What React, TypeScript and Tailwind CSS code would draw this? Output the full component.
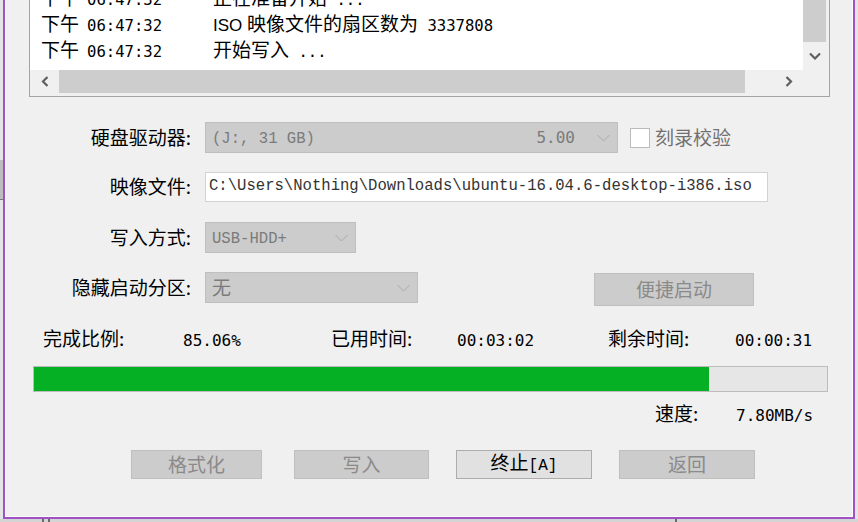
import React from 'react';

type Seg = { t: string; k: 'cjk' | 'mono' | 'sans' };

const logRows: { day: string; time: string; msg: Seg[] }[] = [
  { day: '下午', time: '06:47:32', msg: [{ t: '正在准备开始', k: 'cjk' }, { t: ' ...', k: 'mono' }] },
  {
    day: '下午',
    time: '06:47:32',
    msg: [
      { t: 'ISO ', k: 'sans' },
      { t: '映像文件的扇区数为', k: 'cjk' },
      { t: ' 3337808', k: 'mono' },
    ],
  },
  { day: '下午', time: '06:47:32', msg: [{ t: '开始写入', k: 'cjk' }, { t: ' ...', k: 'mono' }] },
];

const segClass: Record<Seg['k'], string> = {
  cjk: "text-[19px] font-['Noto_Sans_CJK_SC',sans-serif]",
  mono: "text-[15.6px] font-['DejaVu_Sans_Mono',monospace] whitespace-pre",
  sans: "text-[17px] font-['Liberation_Sans',sans-serif] whitespace-pre",
};

const progress = 85.06;

const ComboArrow = () => (
  <svg width="13" height="8" viewBox="0 0 13 8">
    <path d="M0.5 1 L6.5 7 L12.5 1" fill="none" stroke="#a9a9a9" strokeWidth="1" />
  </svg>
);

const ScrollArrow = ({ dir }: { dir: 'down' | 'left' | 'right' }) => {
  if (dir === 'down') {
    return (
      <svg width="12" height="8" viewBox="0 0 12 8">
        <path d="M1 1.5 L6 6.5 L11 1.5" fill="none" stroke="#5f5f5f" strokeWidth="2.2" />
      </svg>
    );
  }
  return (
    <svg width="8" height="11" viewBox="0 0 8 11">
      <path
        d={dir === 'left' ? 'M6.5 1 L2 5.5 L6.5 10' : 'M1.5 1 L6 5.5 L1.5 10'}
        fill="none"
        stroke="#5f5f5f"
        strokeWidth="2.2"
      />
    </svg>
  );
};

const Label: React.FC<{ children: React.ReactNode }> = ({ children }) => (
  <div className="w-[185px] pb-[3px] text-right text-[19px] leading-none text-black">{children}</div>
);

const Combo: React.FC<{ width: string; children: React.ReactNode; right?: string }> = ({ width, children, right }) => (
  <div className={`${width} h-[31px] ml-[14px] flex items-center bg-[#cccccc] border border-[#bfbfbf]`}>
    <div className="flex-1 pl-[6px] text-[#7b7b7b] leading-none">{children}</div>
    {right && (
      <span className="mr-[14px] text-[16px] leading-none text-[#7b7b7b] font-['DejaVu_Sans_Mono',monospace]">{right}</span>
    )}
    <div className="w-[28px] flex justify-center">
      <ComboArrow />
    </div>
  </div>
);

const Btn: React.FC<{ width: string; enabled?: boolean; children: React.ReactNode }> = ({ width, enabled, children }) => (
  <div
    className={`${width} h-[29px] pb-[3px] flex items-center justify-center text-[19px] leading-none border ${
      enabled ? 'bg-[#e1e1e1] border-[#adadad] text-black' : 'bg-[#cccccc] border-[#bfbfbf] text-[#8a8a8a]'
    }`}
  >
    <div className="flex items-baseline">{children}</div>
  </div>
);

export default function App() {
  return (
    <div className="w-[858px] h-[522px] overflow-hidden bg-[#dcdcdc] flex flex-col font-['Noto_Sans_CJK_SC',sans-serif]">
      <div className="flex h-[519px]">
        {/* backdrop left of the window */}
        <div className="w-[3px] flex flex-col">
          <div className="h-[160px] bg-[#e4e4e4]" />
          <div className="h-[40px] bg-[#bdbdbd] border-b border-[#7a7a7a]" />
          <div className="flex-1 bg-[#e4e4e4]" />
        </div>

        <div className="w-[852px] h-[519px] border-x-2 border-b-2 border-[#9f52c6]">
          <div className="h-full border-x border-b border-[#fbfbfb] bg-[#f0f0f0] flex flex-col">
            {/* log list */}
            <div className="ml-[23px] w-[801px] h-[117px] -mt-[20px] border border-[#a3a3a3] bg-[#f0f0f0] pr-[3px] pb-[3px]">
              <div className="h-full grid grid-cols-[1fr_23px] grid-rows-[1fr_23px]">
                <div className="bg-white pt-[5px] pl-[11px] overflow-hidden">
                  {logRows.map((r, i) => (
                    <div key={i} className="h-[26px] pb-[2px] flex items-center leading-none text-black">
                      <div className="flex items-baseline">
                        <div className="w-[172px] flex items-baseline">
                          <span className="text-[19px]">{r.day}</span>
                          <span className="ml-[8px] text-[15.6px] font-['DejaVu_Sans_Mono',monospace]">{r.time}</span>
                        </div>
                        {r.msg.map((s, j) => (
                          <span key={j} className={segClass[s.k]}>
                            {s.t}
                          </span>
                        ))}
                      </div>
                    </div>
                  ))}
                </div>
                <div className="flex flex-col bg-[#f0f0f0]">
                  <div className="h-[61px] bg-[#cdcdcd]" />
                  <div className="flex-1 flex items-center justify-center">
                    <ScrollArrow dir="down" />
                  </div>
                </div>
                <div className="flex bg-[#f0f0f0]">
                  <div className="w-[29px] flex items-center justify-center">
                    <ScrollArrow dir="left" />
                  </div>
                  <div className="w-[686px] bg-[#cdcdcd]" />
                  <div className="flex-1" />
                  <div className="w-[28px] flex items-center justify-center">
                    <ScrollArrow dir="right" />
                  </div>
                </div>
                <div className="bg-[#f0f0f0]" />
              </div>
            </div>

            {/* drive */}
            <div className="mt-[25px] h-[31px] flex items-center">
              <Label>硬盘驱动器:</Label>
              <Combo width="w-[413px]" right="5.00">
                <span className="text-[15.6px] font-['Liberation_Mono',monospace] whitespace-pre">(J:, 31 GB)</span>
              </Combo>
              <div className="ml-[12px] w-[20px] h-[20px] bg-white border border-[#bcbcbc]" />
              <span className="ml-[5px] pb-[3px] text-[19px] leading-none text-[#707070]">刻录校验</span>
            </div>

            {/* image file */}
            <div className="mt-[19px] h-[30px] flex items-center">
              <Label>映像文件:</Label>
              <div className="ml-[14px] w-[563px] h-[30px] flex items-center bg-white border border-[#d2d2d2] pl-[3px]">
                <span className="text-[15.6px] leading-none text-[#333333] font-['Liberation_Mono',monospace] whitespace-pre">
                  C:\Users\Nothing\Downloads\ubuntu-16.04.6-desktop-i386.iso
                </span>
              </div>
            </div>

            {/* write mode */}
            <div className="mt-[20px] h-[31px] flex items-center">
              <Label>写入方式:</Label>
              <Combo width="w-[151px]">
                <span className="text-[15.6px] font-['Liberation_Mono',monospace]">USB-HDD+</span>
              </Combo>
            </div>

            {/* hidden partition */}
            <div className="mt-[19px] h-[34px] flex items-start">
              <div className="h-[31px] flex items-center">
                <Label>隐藏启动分区:</Label>
                <Combo width="w-[213px]">
                  <span className="block pb-[3px] text-[19px]">无</span>
                </Combo>
              </div>
              <div className="ml-[176px] mt-[1px] w-[160px] h-[33px] pb-[3px] flex items-center justify-center bg-[#cccccc] border border-[#bfbfbf] text-[19px] leading-none text-[#8a8a8a]">
                便捷启动
              </div>
            </div>

            {/* stats */}
            <div className="mt-[22px] h-[24px] pb-[3px] pl-[37px] flex items-center leading-none text-black">
              <div className="flex items-baseline">
                <span className="w-[140px] text-[19px]">完成比例:</span>
                <span className="w-[148px] text-[16px] font-['DejaVu_Sans_Mono',monospace]">{progress.toFixed(2)}%</span>
                <span className="w-[126px] text-[19px]">已用时间:</span>
                <span className="w-[151px] text-[16px] font-['DejaVu_Sans_Mono',monospace]">00:03:02</span>
                <span className="w-[127px] text-[19px]">剩余时间:</span>
                <span className="text-[16px] font-['DejaVu_Sans_Mono',monospace]">00:00:31</span>
              </div>
            </div>

            {/* progress bar */}
            <div className="mt-[14px] ml-[27px] w-[795px] h-[26px] border border-[#bcbcbc] bg-[#e6e6e6]">
              <div className="h-full bg-[#06b025]" style={{ width: `${progress}%` }} />
            </div>

            {/* speed */}
            <div className="mt-[10px] h-[24px] pb-[2px] pl-[649px] flex items-center leading-none text-black">
              <div className="flex items-baseline">
                <span className="w-[81px] text-[19px]">速度:</span>
                <span className="text-[16px] font-['DejaVu_Sans_Mono',monospace]">7.80MB/s</span>
              </div>
            </div>

            {/* buttons */}
            <div className="mt-[24px] pl-[125px] flex">
              <Btn width="w-[131px]">格式化</Btn>
              <div className="w-[32px]" />
              <Btn width="w-[135px]">写入</Btn>
              <div className="w-[27px]" />
              <Btn width="w-[136px]" enabled>
                <span>终止</span>
                <span className="text-[16px] font-['Liberation_Mono',monospace]">[A]</span>
              </Btn>
              <div className="w-[27px]" />
              <Btn width="w-[136px]">返回</Btn>
            </div>
          </div>
        </div>

        <div className="flex-1 bg-[#e4e4e4]" />
      </div>

      {/* backdrop under the window */}
      <div className="flex-1 flex bg-[#d4d4d4]">
        <div className="w-[42px]" />
        <div className="w-[2px] bg-[#6a6a6a]" />
        <div className="w-[4px]" />
        <div className="w-[2px] bg-[#6a6a6a]" />
        <div className="w-[625px]" />
        <div className="w-[2px] bg-[#6a6a6a]" />
      </div>
    </div>
  );
}
